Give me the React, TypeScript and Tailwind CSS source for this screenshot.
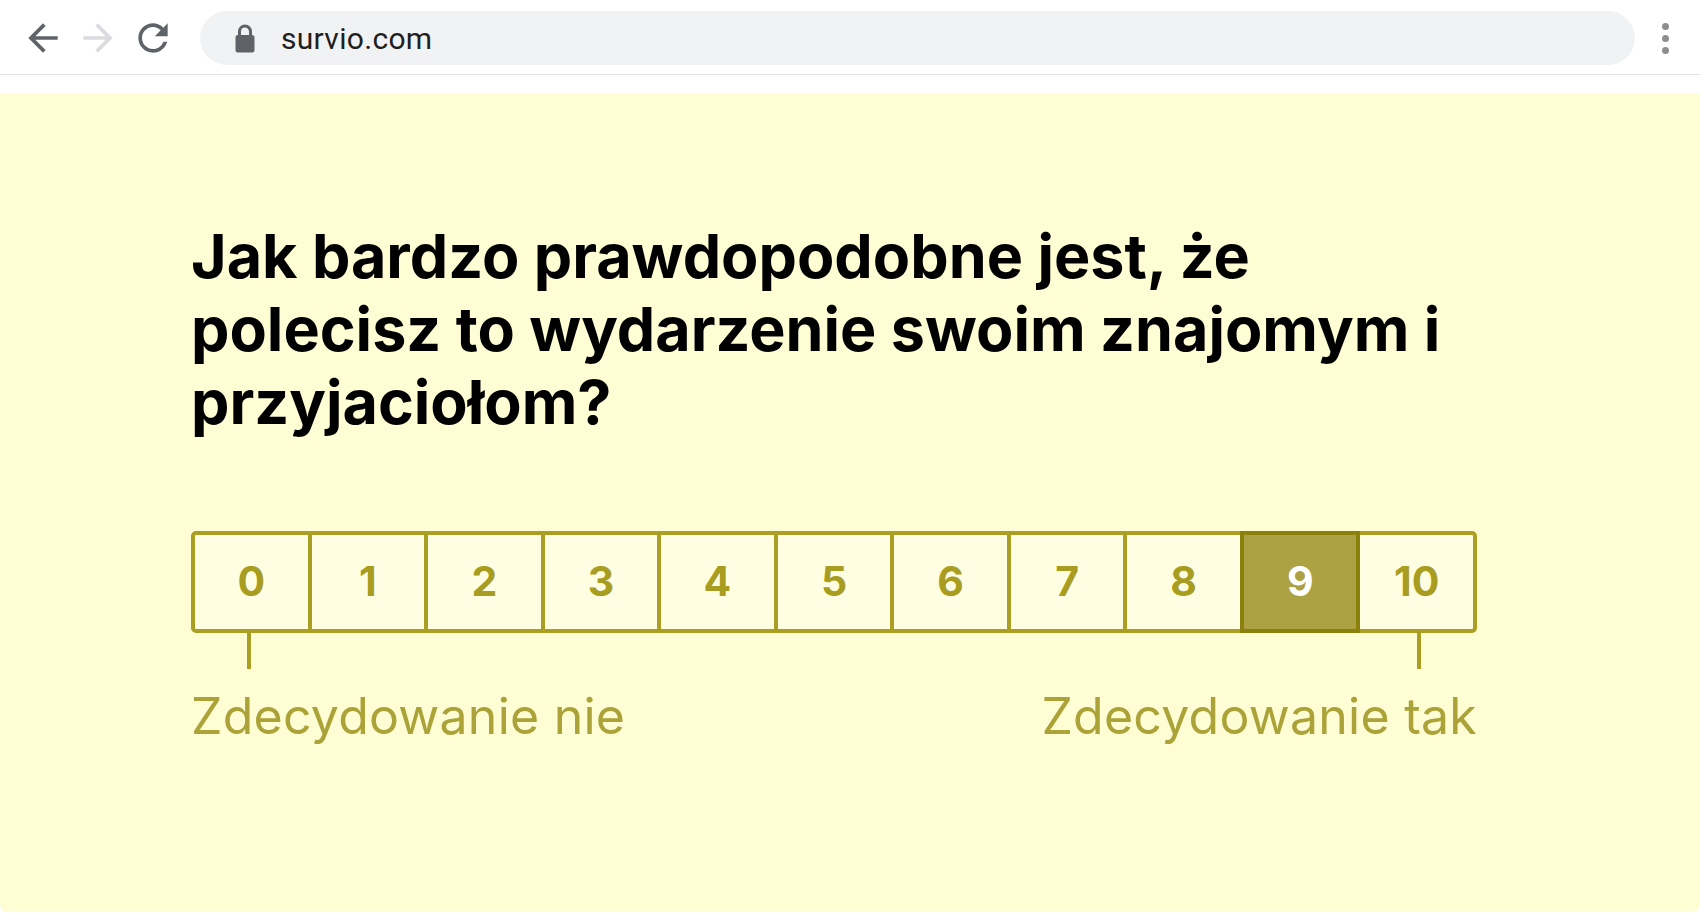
import React from "react";

const scores = [0, 1, 2, 3, 4, 5, 6, 7, 8, 9, 10];
const selected = 9;

function BackIcon() {
  return (
    <svg viewBox="0 0 24 24" className="w-[44px] h-[44px]" fill="#5f6368">
      <path d="M20 11H7.83l5.59-5.59L12 4l-8 8 8 8 1.41-1.41L7.83 13H20v-2z" />
    </svg>
  );
}

function ForwardIcon() {
  return (
    <svg viewBox="0 0 24 24" className="w-[44px] h-[44px]" fill="#dadce0">
      <path d="M12 4l-1.41 1.41L16.17 11H4v2h12.17l-5.58 5.59L12 20l8-8z" />
    </svg>
  );
}

function ReloadIcon() {
  return (
    <svg viewBox="0 0 24 24" className="w-[44px] h-[44px]" fill="#5f6368">
      <path d="M17.65 6.35C16.2 4.9 14.21 4 12 4c-4.42 0-7.99 3.58-7.99 8s3.57 8 7.99 8c3.73 0 6.84-2.55 7.73-6h-2.08c-.82 2.33-3.04 4-5.65 4-3.31 0-6-2.690-6-6s2.69-6 6-6c1.66 0 3.14.69 4.22 1.78L13 11h7V4l-2.35 2.35z" />
    </svg>
  );
}

function LockIcon() {
  return (
    <svg viewBox="0 0 20 30" className="w-[20px] h-[30px]">
      <path d="M4.5 13V8.5a5.5 5.5 0 0 1 11 0V13" fill="none" stroke="#5f6368" strokeWidth="3" />
      <rect x="0.5" y="12" width="19" height="17.5" rx="2.5" fill="#5f6368" />
    </svg>
  );
}

export default function App() {
  return (
    <div className="w-[1700px] h-[915px] bg-white flex flex-col overflow-hidden" style={{ fontFamily: "Inter, 'Noto Sans', sans-serif" }}>
      {/* browser chrome */}
      <div className="h-[75px] shrink-0 flex items-center border-b border-[#e3e3e3] bg-white pt-[2px]">
        <div className="flex items-center gap-[11px] pl-[21px]">
          <BackIcon />
          <ForwardIcon />
          <ReloadIcon />
        </div>
        <div className="ml-[25px] w-[1435px] h-[54px] rounded-full bg-[#f1f2f4] flex items-center pl-[35px] gap-[26px]">
          <LockIcon />
          <span className="text-[30px] tracking-[0.3px] text-[#1f1f1f]" style={{ fontFamily: "Roboto, Arial, sans-serif" }}>
            survio.com
          </span>
        </div>
        <div className="ml-[27px] flex flex-col gap-[5px]">
          <span className="w-[7px] h-[7px] rounded-full bg-[#8e8e8e]" />
          <span className="w-[7px] h-[7px] rounded-full bg-[#8e8e8e]" />
          <span className="w-[7px] h-[7px] rounded-full bg-[#8e8e8e]" />
        </div>
      </div>

      {/* survey panel */}
      <div className="mt-[18px] flex-1 mb-[3px] bg-[#fefdd4] rounded-b-[8px] pl-[191px] pt-[127px]">
        <div className="w-[1286px]">
          <h1 className="text-[61px] leading-[73px] font-bold text-black">
            Jak bardzo prawdopodobne jest, że polecisz to wydarzenie swoim znajomym i przyjaciołom?
          </h1>

          <div className="mt-[92px] flex h-[102px]">
            {scores.map((n, i) => {
              const isSel = n === selected;
              return (
                <div
                  key={n}
                  className={
                    "flex-1 flex items-center justify-center border-[4px] text-[41px] font-bold " +
                    (i > 0 ? "-ml-[4px] " : "") +
                    (i === 0 ? "rounded-l-[5px] " : "") +
                    (i === scores.length - 1 ? "rounded-r-[5px] " : "") +
                    (isSel
                      ? "relative z-10 bg-[#aca243] border-[#8c800c] text-white"
                      : "bg-[#fffee2] border-[#aa9f22] text-[#a89d20]")
                  }
                >
                  {n}
                </div>
              );
            })}
          </div>

          <div className="flex justify-between px-[56px]">
            <span className="w-[4px] h-[36px] bg-[#aa9f22]" />
            <span className="w-[4px] h-[36px] bg-[#aa9f22]" />
          </div>

          <div className="mt-[22px] flex justify-between text-[50px] tracking-[0.25px] leading-none text-[#aba238]">
            <span>Zdecydowanie nie</span>
            <span>Zdecydowanie tak</span>
          </div>
        </div>
      </div>
    </div>
  );
}
